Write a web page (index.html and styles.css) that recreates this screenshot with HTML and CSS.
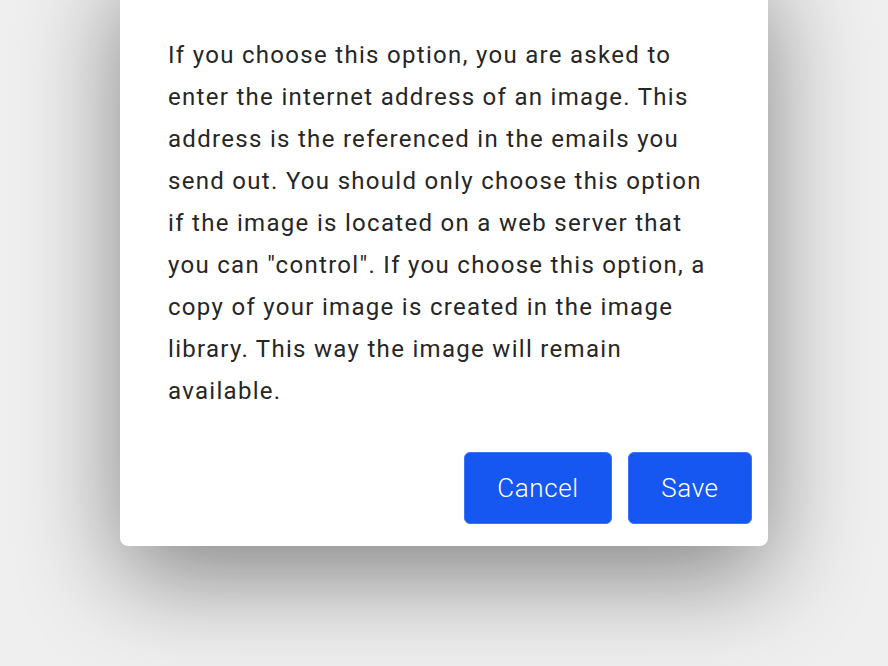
FILE: index.html
```html
<!DOCTYPE html>
<html lang="en">
<head>
    <meta charset="UTF-8">
    <meta name="viewport" content="width=device-width, initial-scale=1">
    <title>Image option</title>
    <link rel="stylesheet" href="styles.css">
</head>
<body>

<div class="dialog">
    <p class="dialog-text">If you choose this option, you are asked to enter the internet address of an image. This address is the referenced in the emails you send out. You should only choose this option if the image is located on a web server that you can "control". If you choose this option, a copy of your image is created in the image library. This way the image will remain available.</p>

    <div class="dialog-buttons">
        <button type="button" class="btn btn-cancel">Cancel</button>
        <button type="button" class="btn btn-save">Save</button>
    </div>
</div>

</body>
</html>
```

FILE: styles.css
```css
body {
    margin: 0;
    min-height: 100vh;
    background-color: #efefef;
    font-family: Roboto, "Liberation Sans", sans-serif;
    overflow: hidden;
}

.dialog {
    width: 648px;
    margin: -40px 0 0 120px;
    padding: 74px 16px 22px 48px;
    box-sizing: border-box;
    background-color: #fff;
    border-radius: 8px;
    box-shadow: 0 30px 100px rgba(0, 0, 0, 0.45);
}

.dialog-text {
    margin: 0;
    padding-right: 32px;
    font-size: 24px;
    line-height: 42px;
    letter-spacing: 1.3px;
    color: #262626;
}

.dialog-buttons {
    display: flex;
    justify-content: flex-end;
    gap: 16px;
    margin-top: 40px;
}

.btn {
    height: 72px;
    padding: 0;
    border: 1px solid #3a75f5;
    border-radius: 6px;
    background-color: #1557f0;
    color: #fff;
    font-family: inherit;
    font-size: 26px;
    font-weight: 300;
    letter-spacing: 0.6px;
    cursor: pointer;
}

.btn-cancel {
    width: 148px;
}

.btn-save {
    width: 124px;
}
```
